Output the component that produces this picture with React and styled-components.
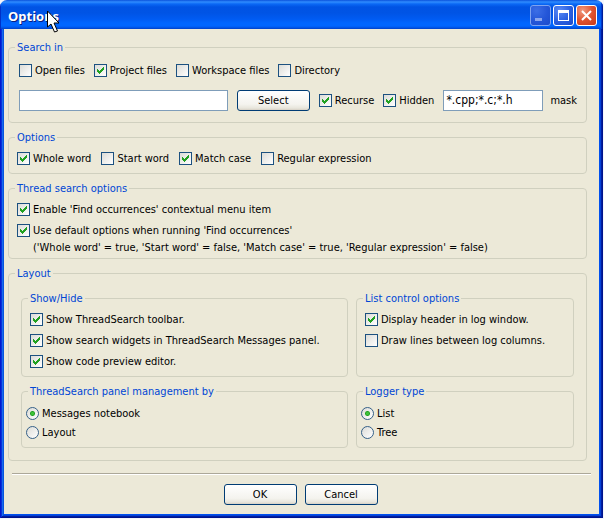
import React, { useState } from "react";
import styled, { createGlobalStyle } from "styled-components";

const FONT = '"DejaVu Sans Condensed", "DejaVu Sans", sans-serif';

const GlobalStyle = createGlobalStyle`
  *, *::before, *::after { box-sizing: border-box; }
  body {
    margin: 0;
    background: #f4f5fb;
    color: #000;
    font: 11px/13px ${FONT};
  }
`;

const Window = styled.main`
  position: relative;
  margin-right: 1px;
  border-radius: 7px 7px 0 0;
  overflow: hidden;
`;

const TitleBar = styled.header`
  display: flex;
  align-items: center;
  gap: 2px;
  height: 29px;
  padding: 2px 6px 0 8px;
  background: linear-gradient(
    180deg,
    #0a52dc 0,
    #2f8cff 2px,
    #0a68f5 4px,
    #0053e4 7px,
    #0054e5 13px,
    #005bf2 19px,
    #0066ff 23px,
    #0066ff 26px,
    #0050e0 28px,
    #003fc4 29px
  );
  box-shadow: inset 1px 0 #0030c8, inset -1px 0 #001e98, inset -2px 0 #0038cc;
`;

const Title = styled.h1`
  flex: 1;
  margin: 0;
  color: #fff;
  font: bold 13px/18px "Noto Sans", sans-serif;
  text-shadow: 1px 1px #0a1f80;
`;

const captionFills = {
  normal: "radial-gradient(circle at 30% 25%, #5c8bf5, #2a5fe0 55%, #1c49c8)",
  dimmed: "radial-gradient(circle at 30% 25%, #3c6ee6, #2456d8 55%, #1c4bcb)",
  close: "radial-gradient(circle at 30% 25%, #f09a80, #e0532f 50%, #c8391a)",
};

const CaptionButton = styled.button`
  width: 21px;
  height: 21px;
  padding: 0;
  border: 1px solid ${(p) => (p.$tone === "dimmed" ? "#7ea3f0" : "#fff")};
  border-radius: 3px;
  background: ${(p) => captionFills[p.$tone]};

  svg { display: block; }
`;

const Body = styled.form`
  padding: 12px 16px 13px 8px;
  background: #ece9d8;
  box-shadow:
    inset 1px 0 #0019cf, inset -1px -1px #00138c,
    inset 2px 0 #0831d9, inset -2px -2px #001ea0,
    inset 3px 0 #166aee, inset -3px -3px #0441d8,
    inset 4px 0 #0855dd, inset -4px -4px #0050ee;
`;

const Stack = styled.div`
  display: flex;
  flex-direction: column;
  gap: 8px;
`;

const Group = styled.fieldset`
  min-width: 0;
  margin: 0;
  padding: ${(p) => p.$pad || "8px"};
  border: 1px solid #d0d0bf;
  border-radius: 4px;
`;

const Legend = styled.legend`
  margin-left: ${(p) => p.$inset || "-2px"};
  padding: 0 2px;
  color: #0046d5;
  line-height: 13px;
`;

const Row = styled.div`
  display: flex;
  align-items: center;
  gap: ${(p) => p.$gap || "9px"};
  margin-top: ${(p) => p.$top || "0"};
`;

const Choices = styled.div`
  display: flex;
  flex-direction: column;
  align-items: flex-start;
  gap: ${(p) => p.$gap || "8px"};
`;

const ChoiceLabel = styled.label`
  display: flex;
  align-items: center;
  gap: 3px;
  white-space: nowrap;
`;

const Mark = styled.span`
  display: grid;
  flex: none;

  > * { grid-area: 1 / 1; }
  svg { pointer-events: none; z-index: 1; }
`;

const Box = styled.input`
  appearance: none;
  width: 13px;
  height: 13px;
  margin: 0;
  border: 1px solid #1c5180;
  background: linear-gradient(135deg, #dcdcd7, #fff);
`;

const Dot = styled(Box)`
  border-color: #356088;
  border-radius: 50%;

  &:checked {
    background: radial-gradient(circle, #3fc43a 0 1px, #21a121 2px, transparent 3px),
      linear-gradient(135deg, #dcdcd7, #fff);
  }
`;

const Note = styled.p`
  margin: 4px 0 0 16px;
  white-space: nowrap;
`;

const TextBox = styled.input`
  flex: ${(p) => (p.$fixed ? "0 0 100px" : "1 1 0")};
  min-width: 0;
  width: 100px;
  height: 21px;
  padding: 0 2px 2px;
  border: 1px solid #7f9db9;
  background: #fff;
  color: #000;
  font: 12px/15px ${FONT};
`;

const MaskLabel = styled.label`
  display: flex;
  flex-direction: row-reverse;
  align-items: center;
  gap: 7px;
`;

const PushButton = styled.button`
  flex: none;
  width: 73px;
  height: 21px;
  padding: 0;
  border: 1px solid #003c74;
  border-radius: 3px;
  background: linear-gradient(180deg, #fff, #f4f3ee 70%, #e8e6dc 90%, #d6d0c5);
  color: #000;
  font: inherit;
`;

const Columns = styled.div`
  display: grid;
  grid-template-columns: 3fr 2fr;
  gap: 8px;
`;

const Rule = styled.hr`
  height: 2px;
  margin: 12px -4px 9px 4px;
  border: 0;
  border-top: 1px solid #aca899;
  border-bottom: 1px solid #fff;
`;

const Actions = styled.footer`
  display: flex;
  justify-content: center;
  gap: 8px;
  margin-left: 6px;
`;

const Pointer = styled.svg`
  position: absolute;
  left: 47px;
  top: 11px;
  pointer-events: none;
`;

function Check({ label, checked = false }) {
  const [on, setOn] = useState(checked);
  return (
    <ChoiceLabel>
      <Mark>
        <Box type="checkbox" checked={on} onChange={() => setOn(!on)} />
        {on && (
          <svg width="13" height="13" shapeRendering="crispEdges" aria-hidden="true">
            <path
              fill="#21a121"
              d="M3 5h1v3h-1zM4 6h1v3h-1zM5 7h1v3h-1zM6 6h1v3h-1zM7 5h1v3h-1zM8 4h1v3h-1zM9 3h1v3h-1z"
            />
          </svg>
        )}
      </Mark>
      {label}
    </ChoiceLabel>
  );
}

function Radio({ label, name, checked }) {
  return (
    <ChoiceLabel>
      <Mark>
        <Dot type="radio" name={name} defaultChecked={checked} />
      </Mark>
      {label}
    </ChoiceLabel>
  );
}

export default function App() {
  return (
    <>
      <GlobalStyle />
      <Window>
        <TitleBar>
          <Title>Options</Title>
          <CaptionButton type="button" aria-label="Minimize" $tone="dimmed">
            <svg width="19" height="19"><path fill="#8ba6ee" d="M4 12h7v3H4z" /></svg>
          </CaptionButton>
          <CaptionButton type="button" aria-label="Maximize" $tone="normal">
            <svg width="19" height="19"><path fill="#fff" fillRule="evenodd" d="M4 4h11v11H4zM5 7v7h9V7z" /></svg>
          </CaptionButton>
          <CaptionButton type="button" aria-label="Close" $tone="close">
            <svg width="19" height="19"><path stroke="#fff" strokeWidth="2" d="M5 5l9 9M14 5l-9 9" /></svg>
          </CaptionButton>
        </TitleBar>

        <Body onSubmit={(e) => e.preventDefault()}>
          <Stack>
            <Group $pad="10px 9px 11px 10px">
              <Legend $inset="-4px">Search in</Legend>
              <Row>
                <Check label="Open files" />
                <Check label="Project files" checked />
                <Check label="Workspace files" />
                <Check label="Directory" />
              </Row>
              <Row $top="13px">
                <TextBox type="text" aria-label="Search directory" />
                <PushButton type="button">Select</PushButton>
                <Check label="Recurse" checked />
                <Check label="Hidden" checked />
                <MaskLabel>
                  mask
                  <TextBox type="text" defaultValue="*.cpp;*.c;*.h" $fixed />
                </MaskLabel>
              </Row>
            </Group>

            <Group>
              <Legend>Options</Legend>
              <Row $gap="10px">
                <Check label="Whole word" checked />
                <Check label="Start word" />
                <Check label="Match case" checked />
                <Check label="Regular expression" />
              </Row>
            </Group>

            <Group $pad="8px 8px 4px">
              <Legend>Thread search options</Legend>
              <Choices>
                <Check label="Enable 'Find occurrences' contextual menu item" checked />
                <Check label="Use default options when running 'Find occurrences'" checked />
              </Choices>
              <Note>
                ('Whole word' = true, 'Start word' = false, 'Match case' = true, 'Regular expression' = false)
              </Note>
            </Group>

            <Group $pad="12px">
              <Legend $inset="-6px">Layout</Legend>
              <Columns>
                <Group>
                  <Legend>Show/Hide</Legend>
                  <Choices>
                    <Check label="Show ThreadSearch toolbar." checked />
                    <Check label="Show search widgets in ThreadSearch Messages panel." checked />
                    <Check label="Show code preview editor." checked />
                  </Choices>
                </Group>
                <Group>
                  <Legend>List control options</Legend>
                  <Choices>
                    <Check label="Display header in log window." checked />
                    <Check label="Draw lines between log columns." />
                  </Choices>
                </Group>
                <Group $pad="9px 4px 8px">
                  <Legend $inset="2px">ThreadSearch panel management by</Legend>
                  <Choices $gap="6px">
                    <Radio name="panel" label="Messages notebook" checked />
                    <Radio name="panel" label="Layout" />
                  </Choices>
                </Group>
                <Group $pad="9px 4px 8px">
                  <Legend $inset="2px">Logger type</Legend>
                  <Choices $gap="6px">
                    <Radio name="logger" label="List" checked />
                    <Radio name="logger" label="Tree" />
                  </Choices>
                </Group>
              </Columns>
            </Group>
          </Stack>

          <Rule />
          <Actions>
            <PushButton type="submit">OK</PushButton>
            <PushButton type="button">Cancel</PushButton>
          </Actions>
        </Body>

        <Pointer width="13" height="22" viewBox="0 0 13 22" aria-hidden="true">
          <path
            fill="#fff"
            stroke="#000"
            d="M.5 0v16l3.500-3 3.500 8 3-1-3.500-8h5z"
          />
        </Pointer>
      </Window>
    </>
  );
}
